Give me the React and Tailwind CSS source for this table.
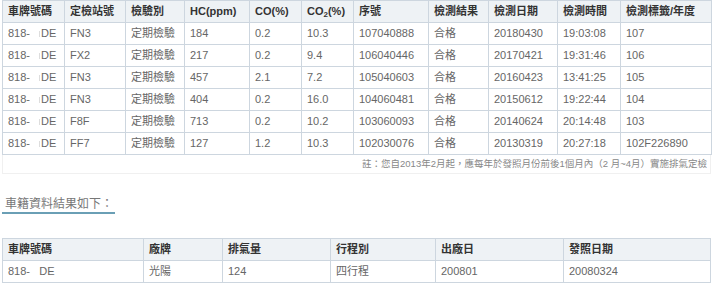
import React from "react";

const font = { fontFamily: '"Liberation Sans", Arial, "Noto Sans CJK TC", sans-serif' };

const inspections = [
  ["FN3", "定期檢驗", "184", "0.2", "10.3", "107040888", "合格", "20180430", "19:03:08", "107"],
  ["FX2", "定期檢驗", "217", "0.2", "9.4", "106040446", "合格", "20170421", "19:31:46", "106"],
  ["FN3", "定期檢驗", "457", "2.1", "7.2", "105040603", "合格", "20160423", "13:41:25", "105"],
  ["FN3", "定期檢驗", "404", "0.2", "16.0", "104060481", "合格", "20150612", "19:22:44", "104"],
  ["F8F", "定期檢驗", "713", "0.2", "10.2", "103060093", "合格", "20140624", "20:14:48", "103"],
  ["FF7", "定期檢驗", "127", "1.2", "10.3", "102030076", "合格", "20130319", "20:27:18", "102F226890"],
];

const topCols = [62, 61, 59, 65, 52, 52, 75, 60, 69, 63, 91];
const carCols = [141, 79, 108, 105, 128, 147];

const th = "border border-[#cdd6df] bg-[#eef2f5] px-[5px] h-[22px] text-left font-bold text-[#333] text-[11px]";
const td = "border border-[#cdd6df] px-[5px] h-[22px] text-left font-normal text-[#666] text-[11px]";

const Plate = () => (
  <span className="inline-flex items-center">
    818-
    <span className="inline-block w-[11px] h-[12px] bg-white relative">
      <span className="absolute right-[1px] top-[3px] w-px h-[6px] bg-[#ddd]" />
    </span>
    DE
  </span>
);

export default function App() {
  return (
    <div className="w-[720px] h-[288px] bg-white overflow-hidden pl-[2px]" style={font}>
      <table className="table-fixed border-collapse w-[709px]">
        <colgroup>
          {topCols.map((w, i) => (
            <col key={i} style={{ width: w }} />
          ))}
        </colgroup>
        <thead>
          <tr>
            <th className={th}>車牌號碼</th>
            <th className={th}>定檢站號</th>
            <th className={th}>檢驗別</th>
            <th className={th}>HC(ppm)</th>
            <th className={th}>CO(%)</th>
            <th className={th}>
              CO<sub className="text-[8px]">2</sub>(%)
            </th>
            <th className={th}>序號</th>
            <th className={th}>檢測結果</th>
            <th className={th}>檢測日期</th>
            <th className={th}>檢測時間</th>
            <th className={th}>檢測標籤/年度</th>
          </tr>
        </thead>
        <tbody>
          {inspections.map((row, i) => (
            <tr key={i}>
              <td className={td}>
                <Plate />
              </td>
              {row.map((cell, j) => (
                <td key={j} className={td}>
                  {cell}
                </td>
              ))}
            </tr>
          ))}
        </tbody>
      </table>

      <div className="w-[709px] h-[19px] border border-t-0 border-[#f0f0f0] flex items-center justify-end pr-[3px] text-[9.5px] text-[#888]">
        註：您自2013年2月起，應每年於發照月份前後1個月內（2 月~4月）實施排氣定檢
      </div>

      <div className="mt-[22px] inline-block border-b-2 border-[#6a9fb5] pl-[3px] pr-[2px] text-[12px] leading-[16px] text-[#777]">
        車籍資料結果如下：
      </div>

      <table className="table-fixed border-collapse w-[708px] mt-[23px]">
        <colgroup>
          {carCols.map((w, i) => (
            <col key={i} style={{ width: w }} />
          ))}
        </colgroup>
        <thead>
          <tr>
            <th className={th}>車牌號碼</th>
            <th className={th}>廠牌</th>
            <th className={th}>排氣量</th>
            <th className={th}>行程別</th>
            <th className={th}>出廠日</th>
            <th className={th}>發照日期</th>
          </tr>
        </thead>
        <tbody>
          <tr>
            <td className={td}>818-&nbsp;&nbsp; DE</td>
            <td className={td}>光陽</td>
            <td className={td}>124</td>
            <td className={td}>四行程</td>
            <td className={td}>200801</td>
            <td className={td}>20080324</td>
          </tr>
        </tbody>
      </table>
    </div>
  );
}
